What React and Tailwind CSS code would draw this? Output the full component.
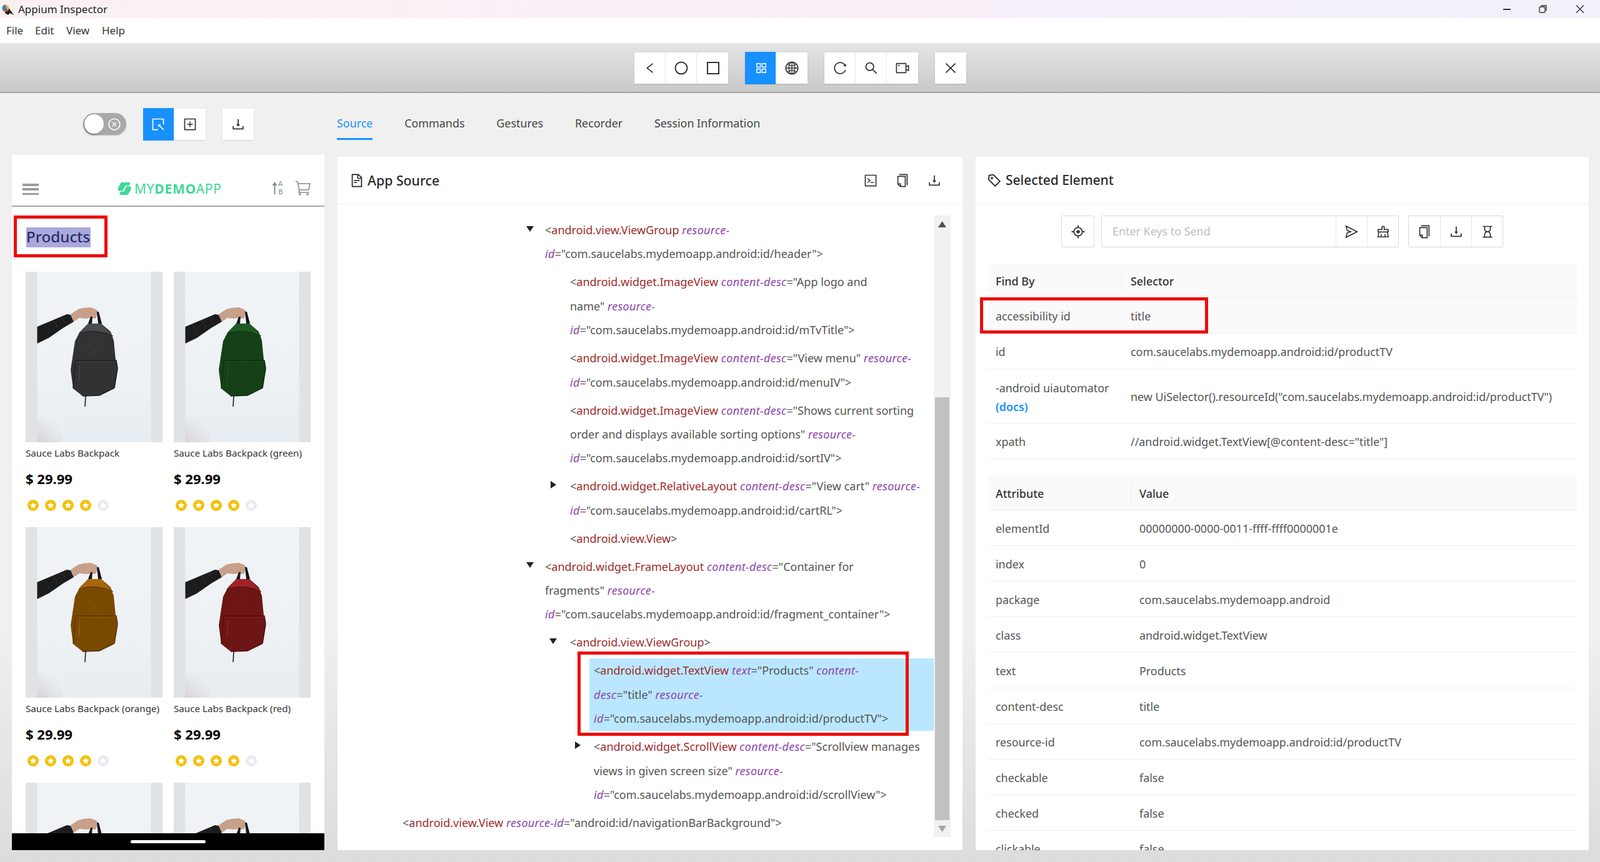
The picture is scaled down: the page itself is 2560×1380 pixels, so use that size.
import React from "react";
import {
  AiOutlineLeft, AiOutlineAppstore, AiOutlineGlobal, AiOutlineReload, AiOutlineSearch, AiOutlineVideoCamera,
  AiOutlineClose, AiOutlineFileText, AiOutlineCode, AiOutlineCopy, AiOutlineDownload, AiOutlineTag, AiOutlineAim,
  AiOutlineSend, AiOutlineClear, AiOutlineHourglass, AiOutlineSelect, AiOutlinePlusSquare, AiOutlineCloseCircle,
} from "react-icons/ai";

const FONT = "font-['Open_Sans','Noto_Sans',sans-serif]";

function ToolBtn({ children, active, last }) {
  return (
    <div className={`w-[50px] flex items-center justify-center text-[22px] ${active ? "bg-[#1890ff] text-white -my-px" : "bg-white text-[#333]"} ${last ? "" : "border-r border-[#e8e8e8]"}`}>
      {children}
    </div>
  );
}

function Group({ children }) {
  return <div className="flex h-[50px] rounded-[2px] shadow-[0_1px_2px_rgba(0,0,0,0.15)] bg-white">{children}</div>;
}

function Circle() {
  return <svg width="22" height="22" viewBox="0 0 22 22" fill="none" stroke="currentColor" strokeWidth="2" className="ml-[2px]"><circle cx="11" cy="11" r="9.5" /></svg>;
}
function Square() {
  return <svg width="20" height="20" viewBox="0 0 20 20" fill="none" stroke="currentColor" strokeWidth="2" className="ml-[2px]"><rect x="1" y="1" width="18" height="18" /></svg>;
}

function Star({ on }) {
  return (
    <svg width="18" height="18" viewBox="0 0 18 18">
      <circle cx="9" cy="9" r="9" fill={on ? "#f3c108" : "#e9ebf2"} />
      <path d="M9 3.6l1.65 3.4 3.75.5-2.73 2.6.67 3.7L9 12l-3.34 1.8.67-3.7L3.6 7.5l3.75-.5z" fill="#fff" />
    </svg>
  );
}

function Backpack({ top, color, seam }) {
  return (
    <svg viewBox="0 0 219 273" className="w-full h-full block" preserveAspectRatio="none">
      <defs>
        <linearGradient id="wall" x1="0" y1="0" x2="0" y2="1">
          <stop offset="0" stopColor="#f0f4f6" />
          <stop offset="0.55" stopColor="#eef2f5" />
          <stop offset="1" stopColor="#e8edf1" />
        </linearGradient>
        <linearGradient id="corner" x1="0" y1="1" x2="0.9" y2="0">
          <stop offset="0" stopColor="#d8d0d2" />
          <stop offset="1" stopColor="#e8edf1" stopOpacity="0" />
        </linearGradient>
        <filter id="soft"><feGaussianBlur stdDeviation="0.45" /></filter>
      </defs>
      <rect width="219" height="273" fill="#dfe3e6" />
      <rect x="18.5" width="182" height="273" fill="url(#wall)" />
      <rect x="18.5" y="233" width="40" height="40" fill="url(#corner)" />
      <g filter="url(#soft)">
        <path d="M18.5 88 L40 79 L66 68 L72 69 L77 80 L60 90 L37 106 L18.5 115z" fill="#1b1b1f" />
        <path d="M30 86l8 12M45 78l6 12M58 73l5 10" stroke="#303034" strokeWidth="1" fill="none" />
        <path d="M72 68 L84 60 L92 58 L104 57 L114 61 L116 66 L112 75 L104 74 L96 75 L86 74 L77 80z" fill="#c8a08a" />
        <path d="M100 83 L104 72 L107 72 L106 83z M114 64 L117 64 L122 83 L116 83z" fill="#18181b" />
        <path d="M100 83 L121 83 L136 96 L141 110 L144 141 L147 155 L142 186 L118 198 L91 199 L76 187 L72 157 L79 111 L87 96z" fill={color} />
        <path d="M100 83 L121 83 L139 102 Q112 90 85 99z" fill={top} />
        <path d="M85 99 Q112 90 140 103" stroke={seam} strokeWidth="1" fill="none" />
        <path d="M105 118l14 30M122 108l-18 30M92 120l22-6" stroke={top} strokeWidth="1" fill="none" opacity="0.25" />
        <path d="M80 142 L145 142 L147 155 L142 186" stroke={seam} strokeWidth="1.6" fill="none" />
        <path d="M80 142 L76 187" stroke={seam} strokeWidth="1.2" fill="none" />
        <path d="M80 144 L144 144" stroke={top} strokeWidth="0.8" fill="none" opacity="0.7" />
        <path d="M87 150 L85 175" stroke={top} strokeWidth="1" />
        <path d="M91 199 L118 198 L142 186" stroke={seam} strokeWidth="1.4" fill="none" />
        <path d="M96 198 L95 216" stroke="#1b1b1e" strokeWidth="1.6" />
      </g>
    </svg>
  );
}

function Card({ title, top, color, seam, imageOnly }) {
  return (
    <div className="w-[219px] h-[393px]">
      <div className="h-[273px]"><Backpack top={top} color={color} seam={seam} /></div>
      {!imageOnly && (
        <>
          <div className="h-[34px] flex items-center font-['Roboto',sans-serif] text-[15.2px] text-[#333] whitespace-nowrap">{title}</div>
          <div className="h-[48px] flex items-center font-['Roboto',sans-serif] text-[22px] font-bold text-black">$ 29.99</div>
          <div className="h-[38px] flex items-center gap-[10px] pl-[3px]">
            <Star on /><Star on /><Star on /><Star on /><Star />
          </div>
        </>
      )}
    </div>
  );
}

function Phone() {
  return (
    <div className="h-[1114px] bg-white flex flex-col overflow-hidden">
      <div className="h-[83px] shrink-0 border-b-2 border-[#a6a6a6] flex items-end pb-[17px] pl-[17px] pr-[21px]">
        <div className="w-[26px] h-[18px] flex flex-col justify-between">
          <div className="h-[3.5px] bg-[#9c9c9c]" /><div className="h-[3.5px] bg-[#9c9c9c]" /><div className="h-[3.5px] bg-[#9c9c9c]" />
        </div>
        <div className="flex items-center ml-[126px] mb-[-1px]">
          <svg width="22" height="22" viewBox="0 0 22 22" fill="#3ed995" stroke="#3ed995" strokeWidth="1" strokeLinejoin="round">
            <path d="M6 1.5h14l-2 4.5h-6l-4 8H1.5V9.5z" />
            <path d="M14 8h7v5l-5 7.5H3.5l2-4.5H11z" />
          </svg>
          <span className="ml-[5px] font-['Lato',sans-serif] text-[21px] leading-none text-[#3ed995] tracking-[0.7px] whitespace-nowrap">
            MY<span className="font-bold">DEMO</span>APP
          </span>
        </div>
        <div className="ml-auto flex items-end gap-[16px]">
          <svg width="20" height="24" viewBox="0 0 20 24" fill="#7f8a96">
            <path d="M4.5 23V6" stroke="#7f8a96" strokeWidth="2" /><path d="M4.5 3L8.5 9H.5z" />
            <text x="10" y="10" fontSize="11" fontFamily="Lato, sans-serif">A</text>
            <text x="10.5" y="23" fontSize="11" fontFamily="Lato, sans-serif">B</text>
          </svg>
          <svg width="27" height="24" viewBox="0 0 25 24" fill="none" stroke="#7f8a96" strokeWidth="1.6" className="mb-[-1px]">
            <path d="M1 1l3 1 3 13h15l2-10H5" /><path d="M7 15l-1 4h17" /><circle cx="8" cy="22" r="1" /><circle cx="20" cy="22" r="1" />
          </svg>
        </div>
      </div>
      <div className="flex-1 overflow-hidden pl-[22px] pr-[22px]">
        <div className="ml-[-19px] mt-[14px] w-[150px] h-[67px] border-[5px] border-[#ee0a0a] pl-[15px] pt-[14px]">
          <span className="block w-[103px] h-[32px] bg-[#a9a9dd] text-[#2c2c66] font-['Inter',sans-serif] font-medium text-[24.2px] leading-[30px] whitespace-nowrap">Products</span>
        </div>
        <div className="mt-[23px] grid grid-cols-[219px_219px] gap-x-[18px] gap-y-[16px]">
          <Card title="Sauce Labs Backpack" top="#4b4b4e" color="#333336" seam="#1c1c1e" />
          <Card title="Sauce Labs Backpack (green)" top="#1f5a24" color="#174018" seam="#0e2c10" />
          <Card title="Sauce Labs Backpack (orange)" top="#a8660a" color="#7a4a06" seam="#553303" />
          <Card title="Sauce Labs Backpack (red)" top="#a02426" color="#6e1617" seam="#4c0e0f" />
          <Card imageOnly top="#4b4b4e" color="#333336" seam="#1c1c1e" />
          <Card imageOnly top="#4b4b4e" color="#333336" seam="#1c1c1e" />
        </div>
      </div>
      <div className="h-[27px] shrink-0 bg-black flex items-center justify-center">
        <div className="w-[120px] h-[5px] bg-white rounded-full" />
      </div>
    </div>
  );
}

const T = ({ children }) => <span className="text-[#a02c2c]">{children}</span>;
const A = ({ children }) => <i className="text-[#8e44ad] tracking-[0.3px]">{children}</i>;

function Lines({ children }) {
  return <div className="text-[18px] leading-[38.4px] text-[#555] whitespace-nowrap">{children}</div>;
}
const L = ({ children }) => <div className="h-[38.4px]">{children}</div>;

function Arrow({ dir, level }) {
  const mr = level === 1 ? "mr-[12px]" : level === 2 ? "mr-[15px]" : "mr-[14px]";
  return (
    <div className={`w-[24px] h-[34px] ${mr} flex items-center justify-center shrink-0`}>
      {dir === "down" && <svg width="12" height="9" viewBox="0 0 12 9"><path d="M0 0h12L6 9z" fill="#222" /></svg>}
      {dir === "right" && <svg width="9" height="12" viewBox="0 0 9 12"><path d="M0 0l9 6-9 6z" fill="#222" /></svg>}
    </div>
  );
}

function TreeRow({ level, dir, children }) {
  const ml = level === 1 ? "ml-[296px]" : level === 2 ? "ml-[333px]" : "ml-[372px]";
  return (
    <div className={`flex ${ml}`}>
      <Arrow dir={dir} level={level} />
      <Lines>{children}</Lines>
    </div>
  );
}

function CenterPanel() {
  return (
    <div className="w-[1000px] bg-white flex flex-col overflow-hidden">
      <div className="h-[76px] shrink-0 border-b border-[#f0f0f0] flex items-center pt-[1px] pl-[19px] pr-[33px]">
        <AiOutlineFileText className="text-[24px] text-[#222]" />
        <span className="ml-[5px] text-[21.3px] font-medium text-[#2a2a2a]">App Source</span>
        <div className="ml-auto flex gap-[27px] text-[24px] text-[#333]">
          <AiOutlineCode /><AiOutlineCopy /><AiOutlineDownload />
        </div>
      </div>
      <div className="flex-1 flex overflow-hidden">
        <div className="flex-1 pt-[22px] flex flex-col gap-[6.6px] overflow-hidden">
          <TreeRow level={1} dir="down">
            <L>&lt;<T>android.view.ViewGroup</T> <A>resource-</A></L>
            <L><A>id</A>="com.saucelabs.mydemoapp.android:id/header"&gt;</L>
          </TreeRow>
          <TreeRow level={2}>
            <L>&lt;<T>android.widget.ImageView</T> <A>content-desc</A>="App logo and</L>
            <L>name" <A>resource-</A></L>
            <L><A>id</A>="com.saucelabs.mydemoapp.android:id/mTvTitle"&gt;</L>
          </TreeRow>
          <TreeRow level={2}>
            <L>&lt;<T>android.widget.ImageView</T> <A>content-desc</A>="View menu" <A>resource-</A></L>
            <L><A>id</A>="com.saucelabs.mydemoapp.android:id/menuIV"&gt;</L>
          </TreeRow>
          <TreeRow level={2}>
            <L>&lt;<T>android.widget.ImageView</T> <A>content-desc</A>="Shows current sorting</L>
            <L>order and displays available sorting options" <A>resource-</A></L>
            <L><A>id</A>="com.saucelabs.mydemoapp.android:id/sortIV"&gt;</L>
          </TreeRow>
          <TreeRow level={2} dir="right">
            <L>&lt;<T>android.widget.RelativeLayout</T> <A>content-desc</A>="View cart" <A>resource-</A></L>
            <L><A>id</A>="com.saucelabs.mydemoapp.android:id/cartRL"&gt;</L>
          </TreeRow>
          <TreeRow level={2}>
            <L>&lt;<T>android.view.View</T>&gt;</L>
          </TreeRow>
          <TreeRow level={1} dir="down">
            <L>&lt;<T>android.widget.FrameLayout</T> <A>content-desc</A>="Container for</L>
            <L>fragments" <A>resource-</A></L>
            <L><A>id</A>="com.saucelabs.mydemoapp.android:id/fragment_container"&gt;</L>
          </TreeRow>
          <TreeRow level={2} dir="down">
            <L>&lt;<T>android.view.ViewGroup</T>&gt;</L>
          </TreeRow>
          <div className="relative ml-[403px] pl-[7px] bg-[#bae7ff] rounded-[2px]">
            <Lines>
              <L>&lt;<T>android.widget.TextView</T> <A>text</A>="Products" <A>content-</A></L>
              <L><A>desc</A>="title" <A>resource-</A></L>
              <L><A>id</A>="com.saucelabs.mydemoapp.android:id/productTV"&gt;</L>
            </Lines>
            <div className="absolute left-[-19px] top-[-11px] w-[530px] h-[135px] border-[5px] border-[#ee0a0a]" />
          </div>
          <TreeRow level={3} dir="right">
            <L>&lt;<T>android.widget.ScrollView</T> <A>content-desc</A>="Scrollview manages</L>
            <L>views in given screen size" <A>resource-</A></L>
            <L><A>id</A>="com.saucelabs.mydemoapp.android:id/scrollView"&gt;</L>
          </TreeRow>
          <div className="ml-[104px]">
            <Lines>
              <L>&lt;<T>android.view.View</T> <A>resource-id</A>="android:id/navigationBarBackground"&gt;</L>
            </Lines>
          </div>
        </div>
        <div className="w-[27px] mr-[19px] mt-[18px] mb-[21px] bg-[#f1f1f1] flex flex-col items-center">
          <div className="h-[291px] w-full flex justify-center pt-[9px]">
            <svg width="13" height="10" viewBox="0 0 13 10"><path d="M6.5 0L13 10H0z" fill="#505050" /></svg>
          </div>
          <div className="w-[23px] h-[677px] bg-[#c1c1c1]" />
          <div className="flex-1 w-full flex justify-center pt-[9px]">
            <svg width="13" height="10" viewBox="0 0 13 10"><path d="M0 0h13L6.5 10z" fill="#a3a3a3" /></svg>
          </div>
        </div>
      </div>
    </div>
  );
}

function Row({ a, b, bg, h, children, attr }) {
  return (
    <div className={`relative flex items-center border-b border-[#f0f0f0] pt-[3px] text-[17.9px] text-[#555] ${h || "h-[57px]"} ${bg || ""}`}>
      <div className={`${attr ? "w-[230px]" : "w-[215px]"} pl-[13px] shrink-0`}>{a}</div>
      <div className={`${attr ? "pl-[13px]" : "pl-[14px]"} whitespace-nowrap`}>{b}</div>
      {children}
    </div>
  );
}

function Head({ a, b, attr }) {
  return (
    <div className="flex items-center h-[55px] bg-[#fafafa] border-b border-[#f0f0f0] text-[17.9px] font-medium text-[#333]">
      <div className={`${attr ? "w-[230px]" : "w-[215px]"} pl-[13px] pt-[3px] shrink-0 h-[30px] flex items-center border-r border-[#ececec]`}>{a}</div>
      <div className={`${attr ? "pl-[13px]" : "pl-[14px]"} pt-[3px]`}>{b}</div>
    </div>
  );
}

function RightPanel() {
  const attrs = [
    ["elementId", "00000000-0000-0011-ffff-ffff0000001e"],
    ["index", "0"],
    ["package", "com.saucelabs.mydemoapp.android"],
    ["class", "android.widget.TextView"],
    ["text", "Products"],
    ["content-desc", "title"],
    ["resource-id", "com.saucelabs.mydemoapp.android:id/productTV"],
    ["checkable", "false"],
    ["checked", "false"],
    ["clickable", "false"],
  ];
  const box = "h-[51px] flex rounded-[2px] border border-[#d9d9d9] bg-white";
  const cell = "w-[50px] flex items-center justify-center text-[24px] text-[#333]";
  return (
    <div className="flex-1 bg-white flex flex-col overflow-hidden rounded-[2px]">
      <div className="h-[76px] shrink-0 border-b border-[#f0f0f0] flex items-center pt-[1px] pl-[18px]">
        <AiOutlineTag className="text-[24px] text-[#222] -scale-x-100" />
        <span className="ml-[6px] text-[21px] font-medium text-[#2a2a2a]">Selected Element</span>
      </div>
      <div className="mt-[18px] flex justify-center gap-[11px]">
        <div className={box}><div className={`${cell} w-[51px]`}><AiOutlineAim /></div></div>
        <div className="flex gap-[15px]">
          <div className={`${box} w-[476px]`}>
            <div className="flex-1 flex items-center pl-[17px] text-[17.9px] text-[#bfbfbf]">Enter Keys to Send</div>
            <div className={`${cell} border-l border-[#e8e8e8]`}><AiOutlineSend /></div>
            <div className={`${cell} border-l border-[#e8e8e8]`}><AiOutlineClear /></div>
          </div>
          <div className={box}>
            <div className={cell}><AiOutlineCopy /></div>
            <div className={`${cell} border-l border-[#e8e8e8]`}><AiOutlineDownload /></div>
            <div className={`${cell} border-l border-[#e8e8e8]`}><AiOutlineHourglass /></div>
          </div>
        </div>
      </div>
      <div className="mt-[26px] mx-[19px]">
        <Head a="Find By" b="Selector" />
        <Row a="accessibility id" b="title" bg="bg-[#fafafa]">
          <div className="absolute left-[-12px] top-[-1px] w-[365px] h-[58px] border-[5px] border-[#ee0a0a]" />
        </Row>
        <Row a="id" b="com.saucelabs.mydemoapp.android:id/productTV" />
        <Row h="h-[87px]" a={<div className="leading-[30px]">-android uiautomator<br /><span className="text-[#1890ff] font-semibold">(docs)</span></div>} b={'new UiSelector().resourceId("com.saucelabs.mydemoapp.android:id/productTV")'} />
        <Row a="xpath" b={'//android.widget.TextView[@content-desc="title"]'} />
      </div>
      <div className="mt-[27px] mx-[19px]">
        <Head a="Attribute" b="Value" attr />
        {attrs.map(([a, b]) => <Row key={a} a={a} b={b} attr />)}
      </div>
    </div>
  );
}

export default function App() {
  return (
    <div className={`w-[2560px] h-[1380px] flex flex-col overflow-hidden ${FONT}`}>
      <div className="h-[29px] shrink-0 bg-[linear-gradient(90deg,#fbf1f3_0%,#f8eef8_55%,#f1f1fa_100%)] flex items-center pl-[3px] text-[17px] text-[#222]">
        <svg width="20" height="18" viewBox="0 0 20 18" className="mt-[2px]">
          <path d="M6 6l4-2 9 13-6-3-3 3-5-3z" fill="#222" />
          <circle cx="6" cy="6" r="5.5" fill="#f5b82e" />
          <path d="M6 .5a5.5 5.5 0 0 0-3 10.1L6 6z" fill="#1e88e5" />
          <path d="M6 6l-3 4.6a5.5 5.5 0 0 0 7 -1z" fill="#e53935" />
          <circle cx="6" cy="6" r="2" fill="#2a7fd0" />
        </svg>
        <span className="ml-[6px]">Appium Inspector</span>
        <div className="ml-auto flex items-center text-[#222]">
          <div className="w-[12px] h-[2px] bg-[#333] mr-[45px]" />
          <svg width="13" height="13" viewBox="0 0 13 13" fill="none" stroke="#333" strokeWidth="1.4" className="mr-[46px]"><rect x="1" y="3" width="9" height="9" rx="1.5" /><path d="M3.5 1H12v8.5" /></svg>
          <svg width="14" height="13" viewBox="0 0 14 13" fill="none" stroke="#333" strokeWidth="1.4" className="mr-[25px]"><path d="M1 0.5l12 12M13 0.5l-12 12" /></svg>
        </div>
      </div>
      <div className="h-[41px] shrink-0 bg-white border-b border-[#e6e6e6] flex items-center pl-[10px] text-[17px] text-[#333]">
        <span className="w-[46px]">File</span><span className="w-[50px]">Edit</span><span className="w-[57px]">View</span><span>Help</span>
      </div>
      <div className="h-[79px] shrink-0 bg-[linear-gradient(180deg,#e4e4e4_0%,#c9c9c9_100%)] border-b-2 border-[#a3a3a3] flex items-center justify-center gap-[27px]">
        <Group><ToolBtn><AiOutlineLeft className="ml-[2px]" /></ToolBtn><ToolBtn><Circle /></ToolBtn><ToolBtn last><Square /></ToolBtn></Group>
        <Group><ToolBtn active><AiOutlineAppstore className="ml-[3px]" /></ToolBtn><ToolBtn last><AiOutlineGlobal className="text-[24px]" /></ToolBtn></Group>
        <Group><ToolBtn><AiOutlineReload className="text-[24px] ml-[2px]" /></ToolBtn><ToolBtn><AiOutlineSearch className="text-[24px] ml-[2px]" /></ToolBtn><ToolBtn last><AiOutlineVideoCamera className="text-[24px]" /></ToolBtn></Group>
        <Group><ToolBtn last><AiOutlineClose className="text-[24px]" /></ToolBtn></Group>
      </div>
      <div className="flex-1 flex bg-[linear-gradient(180deg,#f0f0f0_0%,#f0f0f0_70%,#dcdcdc_100%)] pl-[19px] pr-[18px] pb-[19px] gap-[21px] min-h-0">
        <div className="w-[500px] flex flex-col shrink-0">
          <div className="h-[99px] flex items-center justify-center gap-[27px] shrink-0">
            <div className="w-[69px] h-[35px] rounded-full bg-[#a9a9a9] flex items-center justify-between pl-[2px] pr-[8px] shadow-[0_1px_2px_rgba(0,0,0,0.2)]">
              <div className="w-[31px] h-[31px] rounded-full bg-white shadow-[-1px_2px_3px_rgba(0,0,0,0.25)]" />
              <AiOutlineCloseCircle className="text-[22px] text-white" />
            </div>
            <Group><ToolBtn active><AiOutlineSelect className="text-[24px]" /></ToolBtn><ToolBtn last><AiOutlinePlusSquare className="text-[24px]" /></ToolBtn></Group>
            <Group><ToolBtn last><AiOutlineDownload className="text-[24px]" /></ToolBtn></Group>
          </div>
          <Phone />
        </div>
        <div className="flex-1 flex flex-col min-w-0">
          <div className="h-[102px] shrink-0 pt-[26px] -ml-px flex gap-[50.8px] text-[17.9px] text-[#444]">
            <div className="h-[49px] pb-[1px] flex items-center border-b-[3px] border-[#1890ff] text-[#1890ff]">Source</div>
            <div className="h-[45px] flex items-center">Commands</div>
            <div className="h-[45px] flex items-center">Gestures</div>
            <div className="h-[45px] flex items-center">Recorder</div>
            <div className="h-[45px] flex items-center">Session Information</div>
          </div>
          <div className="flex-1 flex gap-[21px] min-h-0">
            <CenterPanel />
            <RightPanel />
          </div>
        </div>
      </div>
    </div>
  );
}
